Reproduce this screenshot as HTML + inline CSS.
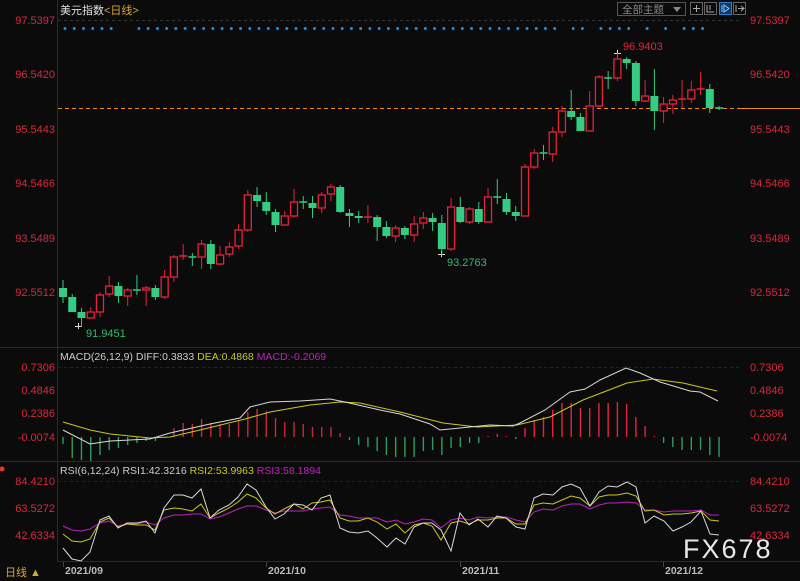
<!DOCTYPE html>
<html><head><meta charset="utf-8"><style>
html,body{margin:0;padding:0;background:#0b0b0b;width:800px;height:581px;overflow:hidden}
svg{display:block}
text{font-family:"Liberation Sans","Noto Sans CJK SC",sans-serif}
</style></head><body>
<svg id="s" width="800" height="581" xmlns="http://www.w3.org/2000/svg">
<rect width="800" height="581" fill="#0b0b0b"/>
<!-- frame lines -->
<line x1="57.5" y1="0" x2="57.5" y2="562" stroke="#2a2a2a"/>
<line x1="0" y1="347.5" x2="800" y2="347.5" stroke="#2a2a2a"/>
<line x1="0" y1="461.5" x2="800" y2="461.5" stroke="#2a2a2a"/>
<line x1="57" y1="561.5" x2="800" y2="561.5" stroke="#2a2a2a"/>
<line x1="58" y1="20.5" x2="740" y2="20.5" stroke="#333" stroke-dasharray="3,3"/>
<line x1="58" y1="367.5" x2="740" y2="367.5" stroke="#262626" stroke-dasharray="3,3"/>
<line x1="58" y1="481.5" x2="740" y2="481.5" stroke="#262626" stroke-dasharray="3,3"/>
<!-- orange line -->
<line x1="58" y1="108.5" x2="740" y2="108.5" stroke="#f08a1c" stroke-dasharray="4,3"/>
<line x1="740" y1="108.5" x2="800" y2="108.5" stroke="#f08a1c"/>
<!-- titles -->
<text x="60" y="14" font-size="11" fill="#e0e0e0">美元指数<tspan fill="#d9a62e">&lt;日线&gt;</tspan></text>
<!-- top right buttons -->
<rect x="617.5" y="2.5" width="68" height="13" fill="none" stroke="#555"/>
<text x="622" y="13" font-size="10.5" fill="#888">全部主题</text><path d="M673 7 L681 7 L677 12Z" fill="#888"/>
<rect x="690.5" y="2.5" width="12" height="12" fill="none" stroke="#666"/><path d="M693 8.5h7M696.5 5v7" stroke="#aaa"/>
<rect x="704.5" y="2.5" width="12" height="12" fill="none" stroke="#666"/><path d="M707 5v7h7M710 5v5" stroke="#aaa" fill="none"/>
<rect x="719.5" y="2.5" width="12" height="12" fill="#0d3b66" stroke="#2a7fd0"/><path d="M722 5v7M724 5l5 3.5-5 3.5z" stroke="#8cc4ff" fill="none"/>
<rect x="733.5" y="2.5" width="12" height="12" fill="none" stroke="#666"/><path d="M736 5v7M738 8.5h6M741 6l3 2.5-3 2.5" stroke="#aaa" fill="none"/>
<!-- price axis -->
<g font-size="11" fill="#d8283f">
<text x="55" y="24" text-anchor="end">97.5397</text><text x="750" y="24">97.5397</text>
<text x="55" y="78" text-anchor="end">96.5420</text><text x="750" y="78">96.5420</text>
<text x="55" y="133" text-anchor="end">95.5443</text><text x="750" y="133">95.5443</text>
<text x="55" y="187" text-anchor="end">94.5466</text><text x="750" y="187">94.5466</text>
<text x="55" y="242" text-anchor="end">93.5489</text><text x="750" y="242">93.5489</text>
<text x="55" y="296" text-anchor="end">92.5512</text><text x="750" y="296">92.5512</text>
<text x="55" y="371" text-anchor="end">0.7306</text><text x="750" y="371">0.7306</text>
<text x="55" y="394" text-anchor="end">0.4846</text><text x="750" y="394">0.4846</text>
<text x="55" y="417" text-anchor="end">0.2386</text><text x="750" y="417">0.2386</text>
<text x="55" y="441" text-anchor="end">-0.0074</text><text x="750" y="441">-0.0074</text>
<text x="55" y="485" text-anchor="end">84.4210</text><text x="750" y="485">84.4210</text>
<text x="55" y="512" text-anchor="end">63.5272</text><text x="750" y="512">63.5272</text>
<text x="55" y="539" text-anchor="end">42.6334</text><text x="750" y="539">42.6334</text>
</g>
<text x="623" y="50" font-size="11" fill="#e8223d">96.9403</text>
<text x="447" y="266" font-size="11" fill="#2fbf6f">93.2763</text>
<text x="86" y="337" font-size="11" fill="#2fbf6f">91.9451</text>
<path d="M614 53.5h7M617.5 50v7M438 254.5h7M441.5 251v6M75 326.5h7M78.5 323v6" stroke="#ddd"/>
<text x="60" y="360" font-size="10.5" fill="#ccc">MACD(26,12,9) DIFF:0.3833 <tspan fill="#c8c820">DEA:0.4868</tspan> <tspan fill="#c020c0">MACD:-0.2069</tspan></text>
<text x="60" y="474" font-size="10.5" fill="#ccc">RSI(6,12,24) RSI1:42.3216 <tspan fill="#c8c820">RSI2:53.9963</tspan> <tspan fill="#c020c0">RSI3:58.1894</tspan></text>
<circle cx="2" cy="469" r="2.5" fill="#e33"/>
<!-- dates -->
<g font-size="10.5" fill="#bbb" font-weight="bold">
<text x="65" y="574">2021/09</text><text x="268" y="574">2021/10</text><text x="462" y="574">2021/11</text><text x="665" y="574">2021/12</text>
</g>
<path d="M63.5 562v5M266.5 562v5M460.5 562v5M663.5 562v5" stroke="#444"/>
<text x="5" y="576" font-size="11" fill="#d9a62e">日线 ▲</text>
<text x="683" y="558" font-size="27" fill="#e8e8e8" letter-spacing="2">FX678</text>
<g id="g"></g>
</svg>
<script>
var g=document.getElementById('g'),h='';
var X=function(i){return 63+i*9.24};
// [open,close,high,low] in y px; close<open => red (up)
var C=[[288,297,280,303],[297,312,294,312],[312,318,308,327],[318,312,307,318],[312,295,292,317],[294,286,276,297],[286,296,282,303],[296,290,288,306],[290,290,275,295],[290,288,286,306],[288,297,285,300],[297,277,270,299],[277,257,255,282],[257,256,244,260],[257,257,253,266],[257,244,240,269],[244,264,240,269],[264,255,246,265],[254,247,242,257],[246,230,224,249],[230,195,190,232],[195,201,187,207],[202,211,192,215],[212,225,209,232],[225,216,211,226],[216,202,189,218],[202,202,196,209],[203,208,196,218],[208,195,192,213],[194,187,184,201],[187,212,185,213],[213,216,209,227],[216,218,211,223],[217,217,205,223],[217,227,215,241],[227,236,221,238],[236,228,225,242],[228,235,226,239],[235,224,216,242],[223,218,212,229],[218,222,213,231],[223,249,215,255],[249,207,198,251],[207,222,197,223],[222,209,207,224],[209,222,202,224],[222,197,188,223],[197,197,179,204],[199,212,193,215],[212,216,206,221],[216,167,164,216],[167,153,149,169],[153,153,145,160],[154,132,127,162],[132,111,106,137],[111,117,90,120],[117,131,113,131],[131,106,91,131],[106,77,75,108],[78,78,71,89],[78,59,53,81],[59,63,57,69],[63,101,61,106],[101,96,80,102],[96,111,69,130],[111,104,97,123],[104,100,95,114],[99,99,80,108],[99,90,81,103],[89,89,72,95],[89,108,84,113],[108,108,106,110]];
C.forEach(function(c,i){var x=X(i),up=c[1]<c[0]||(c[1]==c[0]&&[13,29,33,67,69].indexOf(i)>=0&&false);
 var red=c[1]<c[0]||[9,13,33,67,69].indexOf(i)>=0;var col=red?'#e8223d':'#33cc80';
 var t=Math.min(c[0],c[1]),b=Math.max(c[0],c[1]);
 h+='<line x1="'+x+'" y1="'+c[2]+'" x2="'+x+'" y2="'+c[3]+'" stroke="'+col+'"/>';
 if(b-t<1.5){h+='<line x1="'+(x-4)+'" y1="'+t+'" x2="'+(x+4)+'" y2="'+t+'" stroke="'+col+'" stroke-width="1.5"/>';}
 else if(red){h+='<rect x="'+(x-3.5)+'" y="'+t+'" width="7" height="'+(b-t)+'" fill="#0b0b0b" stroke="'+col+'" stroke-width="1.3"/>';}
 else h+='<rect x="'+(x-4)+'" y="'+t+'" width="8" height="'+(b-t)+'" fill="'+col+'"/>';
});
// blue dots
var D=[0,1,2,3,4,5];for(var i=8;i<=53;i++)D.push(i);D=D.concat([55,56,58,59,60,61,63,65,67,68,69]);
D.forEach(function(i){h+='<circle cx="'+(65+i*9.24)+'" cy="28.5" r="1.5" fill="#1e8fe0"/>'});
// macd hist
var M=[444,458,460,461,455,450,448,445,443,441,441,437,428,423,424,419,423,424,424,421,412,409,411,418,422,422,424,427,427,427,433,440,445,447,451,455,457,457,457,451,450,455,448,447,443,443,436,434,436,439,428,420,417,410,403,403,408,408,403,403,402,404,417,426,436,443,447,450,450,450,455,457];
M.forEach(function(y,i){var x=X(i);var col=y<437?(i<40?'#c8283a':'#e8223d'):'#2a9d60';h+='<line x1="'+x+'" y1="437" x2="'+x+'" y2="'+y+'" stroke="'+col+'" stroke-width="1.4"/>'});
function pl(p,c){h+='<polyline fill="none" stroke="'+c+'" stroke-width="1" points="'+p+'"/>'}
pl('63,422 90,430 110,434 150,438 170,437 200,430 245,419 270,412 310,405 340,402 360,403 400,412 443,423 477,427 517,425 550,417 583,400 627,383 653,379 683,383 717,391','#c8c820');
pl('63,430 90,444 110,441 150,439 170,433 210,424 240,418 250,407 270,402 300,401 330,399 345,402 380,410 400,414 430,424 440,430 470,427 490,425 513,426 520,423 545,410 570,392 585,389 600,380 626,368 640,373 660,382 690,391 700,392 718,401','#d8d8d8');
pl('63,526 72,530 81,531 90,529 100,523 109,521 118,526 127,524 137,524 146,522 155,525 164,518 174,515 183,515 192,514 201,514 210,519 219,517 229,513 238,509 247,506 256,506 266,510 275,513 284,511 294,511 303,511 312,509 321,508 330,507 340,515 349,516 358,518 368,518 377,518 387,522 396,520 405,524 414,522 423,519 432,520 441,528 451,520 460,518 469,520 478,517 488,518 497,517 506,517 516,520 525,522 534,512 543,509 553,510 562,506 571,504 580,504 590,509 599,505 608,503 617,503 627,502 636,503 645,510 654,510 664,512 673,511 682,511 691,511 701,510 710,515 719,515','#c020c0');
pl('63,534 72,541 81,542 90,539 100,522 109,518 118,527 127,524 137,525 146,525 155,530 164,510 174,508 183,509 192,511 201,504 210,518 219,513 229,508 238,502 247,494 256,498 266,508 275,514 284,509 294,504 303,509 312,503 321,502 330,500 340,518 349,521 358,521 368,518 377,522 387,529 396,524 405,533 414,525 423,523 432,526 441,540 451,523 460,521 469,524 478,520 488,520 497,518 506,518 516,524 525,524 534,505 543,503 553,504 562,500 571,496 580,498 590,506 599,497 608,495 617,495 627,493 636,496 645,511 654,510 664,515 673,514 682,514 691,513 701,511 710,520 719,521','#c8c820');
pl('63,548 72,559 81,561 90,552 100,520 109,516 118,528 127,523 137,523 146,521 155,533 164,508 174,495 183,495 192,498 201,489 210,518 219,510 229,505 238,497 247,484 256,490 266,507 275,519 284,514 294,504 303,505 312,510 321,498 330,495 340,528 349,532 358,533 368,531 377,538 387,547 396,538 405,544 414,527 423,523 432,523 441,530 451,551 460,513 469,525 478,519 488,527 497,516 506,518 516,527 525,529 534,498 543,494 553,495 562,487 571,484 580,488 590,506 599,492 608,486 617,487 627,482 636,487 645,523 654,516 664,521 673,531 682,527 691,522 701,511 710,534 719,535','#d8d8d8');
g.innerHTML=h;
</script>
</body></html>
